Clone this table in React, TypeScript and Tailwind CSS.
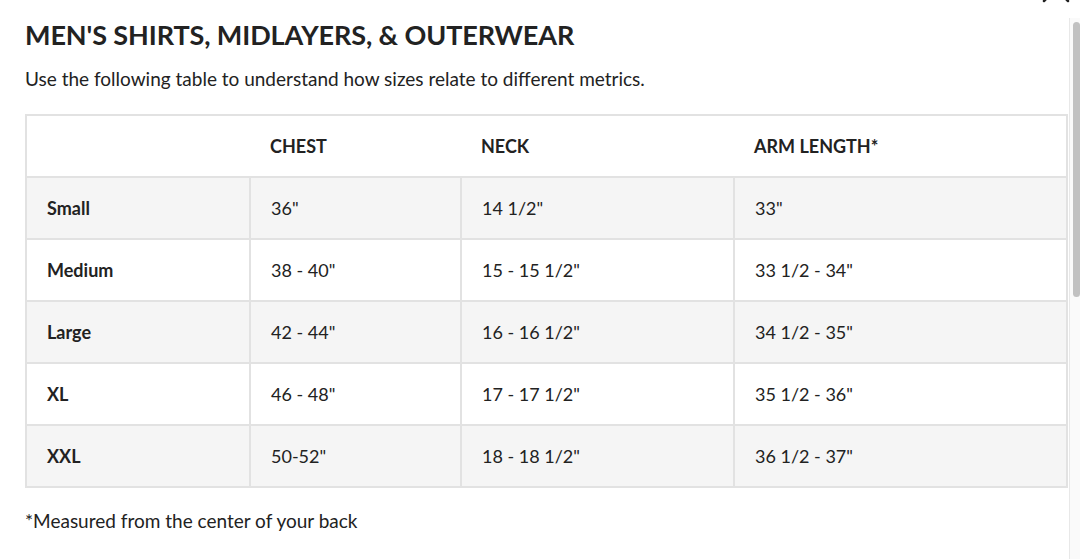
import React from 'react';

const rows = [
  ['Small', '36"', '14 1/2"', '33"'],
  ['Medium', '38 - 40"', '15 - 15 1/2"', '33 1/2 - 34"'],
  ['Large', '42 - 44"', '16 - 16 1/2"', '34 1/2 - 35"'],
  ['XL', '46 - 48"', '17 - 17 1/2"', '35 1/2 - 36"'],
  ['XXL', '50-52"', '18 - 18 1/2"', '36 1/2 - 37"'],
];

export default function App() {
  return (
    <div
      className="relative h-[559px] w-[1080px] overflow-hidden bg-white text-[#222]"
      style={{ fontFamily: 'Lato, "Noto Sans", sans-serif' }}
    >
      {/* close button, mostly scrolled out of view */}
      <button className="absolute right-[9px] top-[-26px] h-[30px] w-[30px] text-[#222]">
        <svg viewBox="0 0 30 30" className="h-full w-full" fill="none" stroke="currentColor" strokeWidth="2.5" strokeLinecap="round">
          <path d="M3 3 L27 27 M27 3 L3 27" />
        </svg>
      </button>

      <div className="flex h-full">
        <div className="flex-1 pl-[25px] pr-[1px]">
          <h2 className="mt-[18px] text-[27px] font-bold leading-[34px] tracking-[-0.1px]">
            MEN'S SHIRTS, MIDLAYERS, &amp; OUTERWEAR
          </h2>
          <p className="mt-[15px] text-[19px] leading-[24px]">
            Use the following table to understand how sizes relate to different metrics.
          </p>

          <table className="mt-[23px] w-[1041px] table-fixed border-collapse border-2 border-[#e2e2e2] text-[18px]">
            <colgroup>
              <col className="w-[224px]" />
              <col className="w-[211px]" />
              <col className="w-[273px]" />
              <col className="w-[333px]" />
            </colgroup>
            <thead>
              <tr className="h-[62px] bg-white">
                <th />
                <th className="pl-[20px] text-left font-bold">CHEST</th>
                <th className="pl-[20px] text-left font-bold">NECK</th>
                <th className="pl-[20px] text-left font-bold">ARM LENGTH*</th>
              </tr>
            </thead>
            <tbody>
              {rows.map((r, i) => (
                <tr key={r[0]} className={`h-[62px] ${i % 2 === 0 ? 'bg-[#f5f5f5]' : 'bg-white'}`}>
                  <td className="border-2 border-[#e2e2e2] pl-[20px] font-bold">{r[0]}</td>
                  <td className="border-2 border-[#e2e2e2] pl-[20px]">{r[1]}</td>
                  <td className="border-2 border-[#e2e2e2] pl-[20px]">{r[2]}</td>
                  <td className="border-2 border-[#e2e2e2] pl-[20px]">{r[3]}</td>
                </tr>
              ))}
            </tbody>
          </table>

          <p className="mt-[21px] text-[19px] leading-[24px]">*Measured from the center of your back</p>
        </div>

        {/* scrollbar */}
        <div className="mt-[18px] w-[12px] border-l border-[#e8e8e8] bg-[#fafafa] pt-[4px]">
          <div className="ml-[3px] h-[275px] w-[7px] rounded-full bg-[#c1c1c1]" />
        </div>
      </div>
    </div>
  );
}
